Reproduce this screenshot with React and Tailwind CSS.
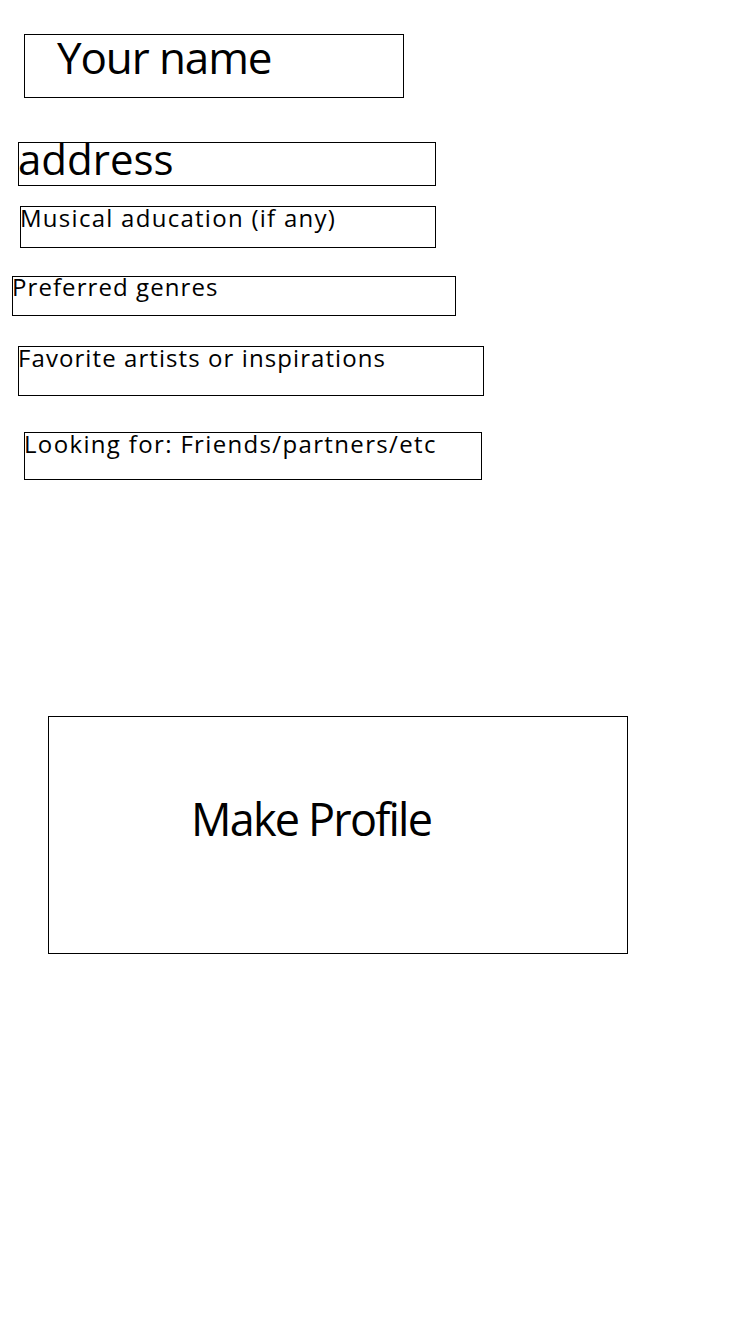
export default function App() {
  return (
    <div className="min-h-[1334px] w-[750px] bg-white text-black font-['Open_Sans',sans-serif] flex flex-col items-start">
      {/* Name */}
      <div className="ml-[24px] mt-[34px] w-[380px] h-[64px] border border-black pl-[32px]">
        <span className="block text-[44px] leading-[44px] tracking-[-0.025em] whitespace-nowrap">
          Your name
        </span>
      </div>

      {/* Address */}
      <div className="ml-[18px] mt-[44px] w-[418px] h-[44px] border border-black">
        <span className="block -ml-[1px] text-[42px] leading-[32px] whitespace-nowrap">
          address
        </span>
      </div>

      {/* Musical education */}
      <div className="ml-[20px] mt-[20px] w-[416px] h-[42px] border border-black">
        <span className="block -ml-[1px] text-[24px] leading-[21px] tracking-[0.053em] whitespace-nowrap">
          Musical aducation (if any)
        </span>
      </div>

      {/* Genres */}
      <div className="ml-[12px] mt-[28px] w-[444px] h-[40px] border border-black">
        <span className="block -ml-[1px] text-[24px] leading-[19px] tracking-[0.045em] whitespace-nowrap">
          Preferred genres
        </span>
      </div>

      {/* Artists */}
      <div className="ml-[18px] mt-[30px] w-[466px] h-[50px] border border-black">
        <span className="block -ml-[1px] text-[24px] leading-[21px] tracking-[0.045em] whitespace-nowrap">
          Favorite artists or inspirations
        </span>
      </div>

      {/* Looking for */}
      <div className="ml-[24px] mt-[36px] w-[458px] h-[48px] border border-black">
        <span className="block -ml-[1px] text-[24px] leading-[21px] tracking-[0.056em] whitespace-nowrap">
          Looking for: Friends/partners/etc
        </span>
      </div>

      <button
        type="button"
        className="ml-[48px] mt-[236px] w-[580px] h-[238px] border border-black flex flex-col items-start justify-start pt-[79px] pl-[142px]"
      >
        <span className="block text-[45px] leading-none tracking-[-0.04em] whitespace-nowrap">
          Make Profile
        </span>
      </button>
    </div>
  );
}
